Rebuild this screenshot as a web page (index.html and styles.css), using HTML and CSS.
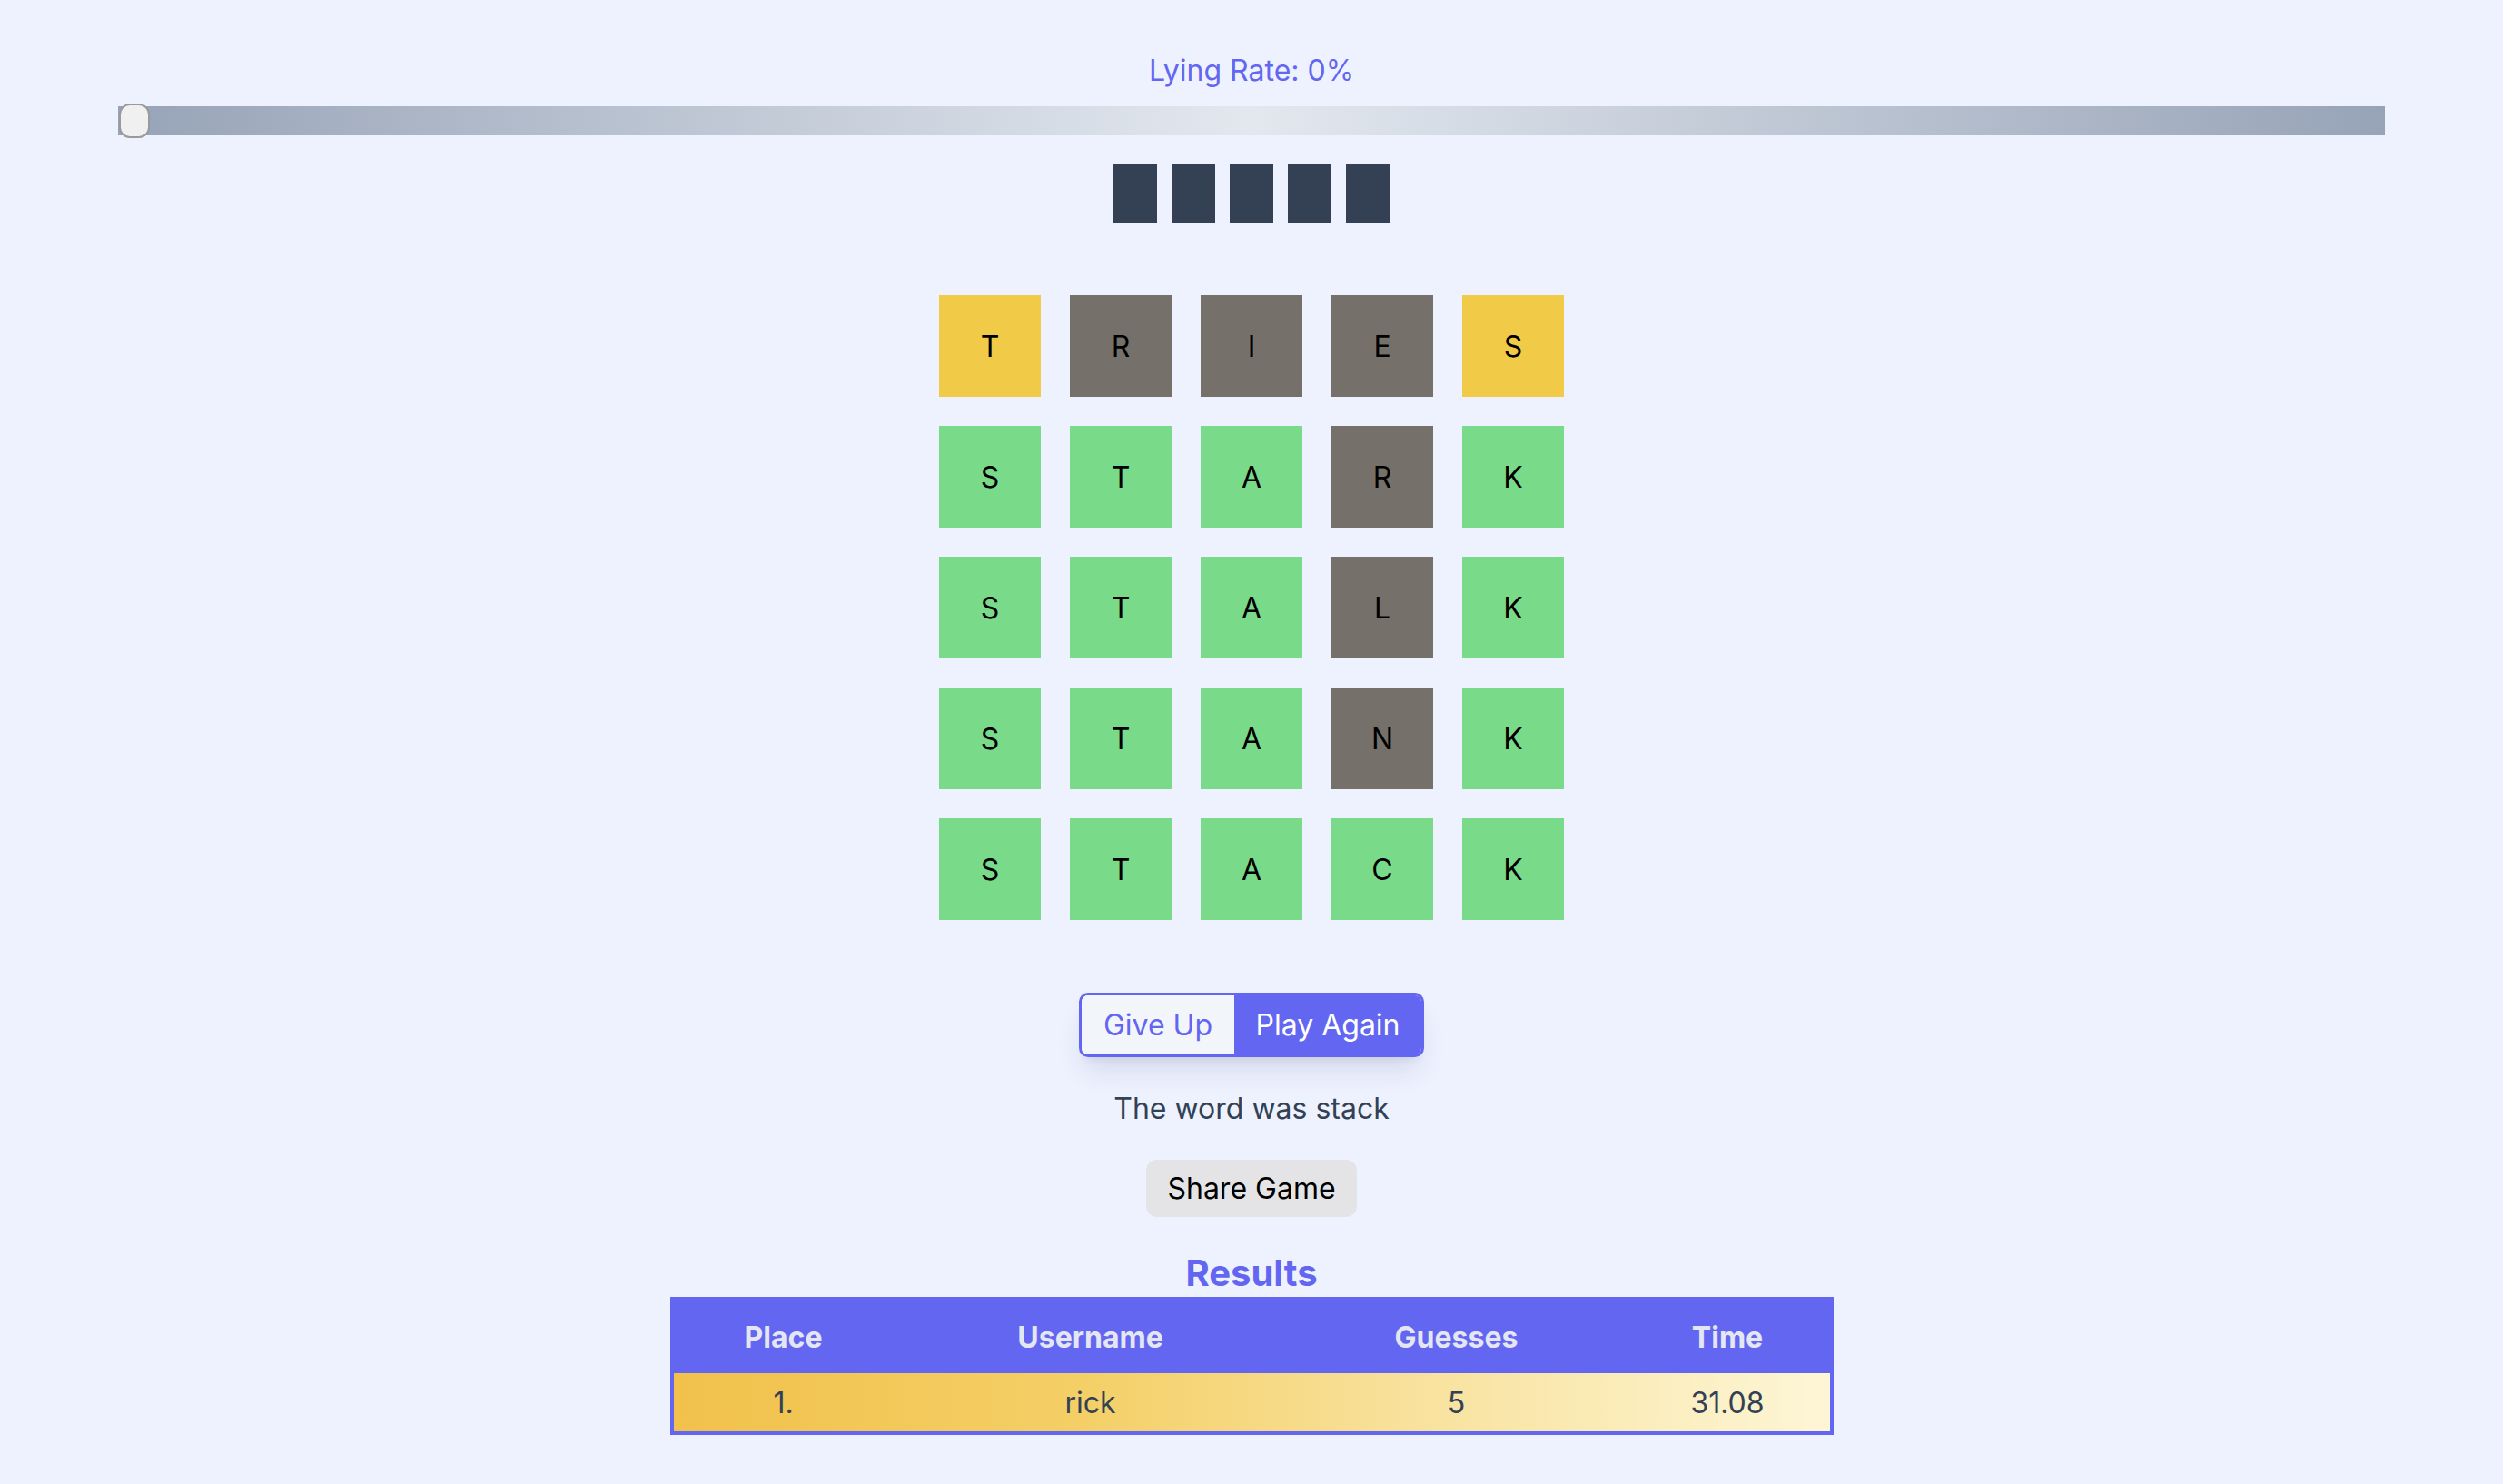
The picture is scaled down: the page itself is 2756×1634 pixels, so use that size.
FILE: index.html
```html
<!DOCTYPE html>
<html lang="en">
<head>
<meta charset="utf-8">
<title>Lying Wordle</title>
<link rel="stylesheet" href="styles.css">
</head>
<body>
<main class="page">
  <div class="rate-label">Lying Rate: 0%</div>
  <div class="slider">
    <span class="thumb"></span>
  </div>
  <div class="hidden-word">
    <span class="blank"></span><span class="blank"></span><span class="blank"></span><span class="blank"></span><span class="blank"></span>
  </div>
  <div class="board">
    <div class="tile yellow">T</div><div class="tile gray">R</div><div class="tile gray">I</div><div class="tile gray">E</div><div class="tile yellow">S</div>
    <div class="tile green">S</div><div class="tile green">T</div><div class="tile green">A</div><div class="tile gray">R</div><div class="tile green">K</div>
    <div class="tile green">S</div><div class="tile green">T</div><div class="tile green">A</div><div class="tile gray">L</div><div class="tile green">K</div>
    <div class="tile green">S</div><div class="tile green">T</div><div class="tile green">A</div><div class="tile gray">N</div><div class="tile green">K</div>
    <div class="tile green">S</div><div class="tile green">T</div><div class="tile green">A</div><div class="tile green">C</div><div class="tile green">K</div>
  </div>
  <div class="btn-group">
    <button class="btn-give">Give Up</button><button class="btn-play">Play Again</button>
  </div>
  <p class="word-msg">The word was stack</p>
  <button class="btn-share">Share Game</button>
  <h2 class="results-title">Results</h2>
  <table class="results">
    <thead>
      <tr><th class="c-place">Place</th><th class="c-user">Username</th><th class="c-guess">Guesses</th><th class="c-time">Time</th></tr>
    </thead>
    <tbody>
      <tr class="first"><td>1.</td><td>rick</td><td>5</td><td>31.08</td></tr>
    </tbody>
  </table>
</main>
</body>
</html>
```
FILE: styles.css
```css
html, body {
  margin: 0;
  padding: 0;
  background: #eef2ff;
  min-height: 100%;
}
body {
  font-family: Inter, "Noto Sans", "Liberation Sans", sans-serif;
  font-size: 32px;
  line-height: 48px;
  color: #334155;
}
.page {
  display: flex;
  flex-direction: column;
  align-items: center;
  padding: 54px 130px 40px;
}
.rate-label {
  color: #6366f1;
  font-size: 32px;
  line-height: 48px;
}
.slider {
  position: relative;
  align-self: stretch;
  height: 32px;
  margin-top: 15px;
  background: linear-gradient(90deg, #97a3b7 0%, #e3e8ef 50%, #97a3b7 100%);
}
.thumb {
  position: absolute;
  left: 1px;
  top: -3px;
  width: 30px;
  height: 34px;
  border: 2px solid #9a9a9a;
  border-radius: 12px;
  background: #f0f0f0;
}
.hidden-word {
  display: flex;
  gap: 16px;
  margin-top: 32px;
}
.blank {
  width: 48px;
  height: 64px;
  background: #344155;
}
.board {
  display: grid;
  grid-template-columns: repeat(5, 112px);
  grid-auto-rows: 112px;
  gap: 32px;
  margin-top: 80px;
}
.tile {
  display: flex;
  align-items: center;
  justify-content: center;
  color: #000;
  font-size: 32px;
  padding-top: 2px;
}
.yellow { background: #f1cb48; }
.gray { background: #76706b; }
.green { background: #79da8a; }
.btn-group {
  display: flex;
  margin-top: 80px;
  border: 3px solid #6366f1;
  border-radius: 10px;
  overflow: hidden;
  box-shadow: 0 20px 30px -6px rgba(30, 41, 90, 0.12), 0 8px 12px -8px rgba(30, 41, 90, 0.12);
}
.btn-group button {
  font-family: inherit;
  font-size: 32px;
  line-height: 48px;
  height: 65px;
  border: 0;
  margin: 0;
  padding: 0;
  white-space: nowrap;
  cursor: pointer;
}
.btn-give {
  background: #f2f5fa;
  color: #6366f1;
  width: 168px;
}
.btn-play {
  background: #6366f1;
  color: #fff;
  width: 206px;
}
.word-msg {
  margin: 33px 0 0;
  font-size: 32px;
  line-height: 48px;
  color: #334155;
}
.btn-share {
  margin-top: 32px;
  font-family: inherit;
  font-size: 32px;
  line-height: 48px;
  height: 63px;
  width: 232px;
  padding: 0;
  border: 0;
  border-radius: 12px;
  background: #e4e4e6;
  color: #000;
}
.results-title {
  margin: 36px 0 0;
  font-size: 40px;
  line-height: 52px;
  font-weight: 700;
  color: #6366f1;
}
.results {
  border-collapse: separate;
  border-spacing: 0;
  border: 4px solid #6366f1;
  table-layout: fixed;
  width: 1281px;
  margin-top: 0;
}
.results th {
  background: #6366f1;
  color: #e4e7f2;
  font-weight: 700;
  font-size: 32px;
  line-height: 48px;
  padding: 17px 0 15px;
  text-align: center;
}
.c-place { width: 242px; }
.c-user { width: 434px; }
.c-guess { width: 372px; }
.c-time { width: 225px; }
.results td {
  text-align: center;
  padding: 9px 0 7px;
  font-size: 32px;
  line-height: 48px;
  color: #334155;
}
.first {
  background: linear-gradient(90deg, #f1c14b 0%, #f4cf66 35%, #f8e29e 65%, #fdf6d6 100%);
}
```
